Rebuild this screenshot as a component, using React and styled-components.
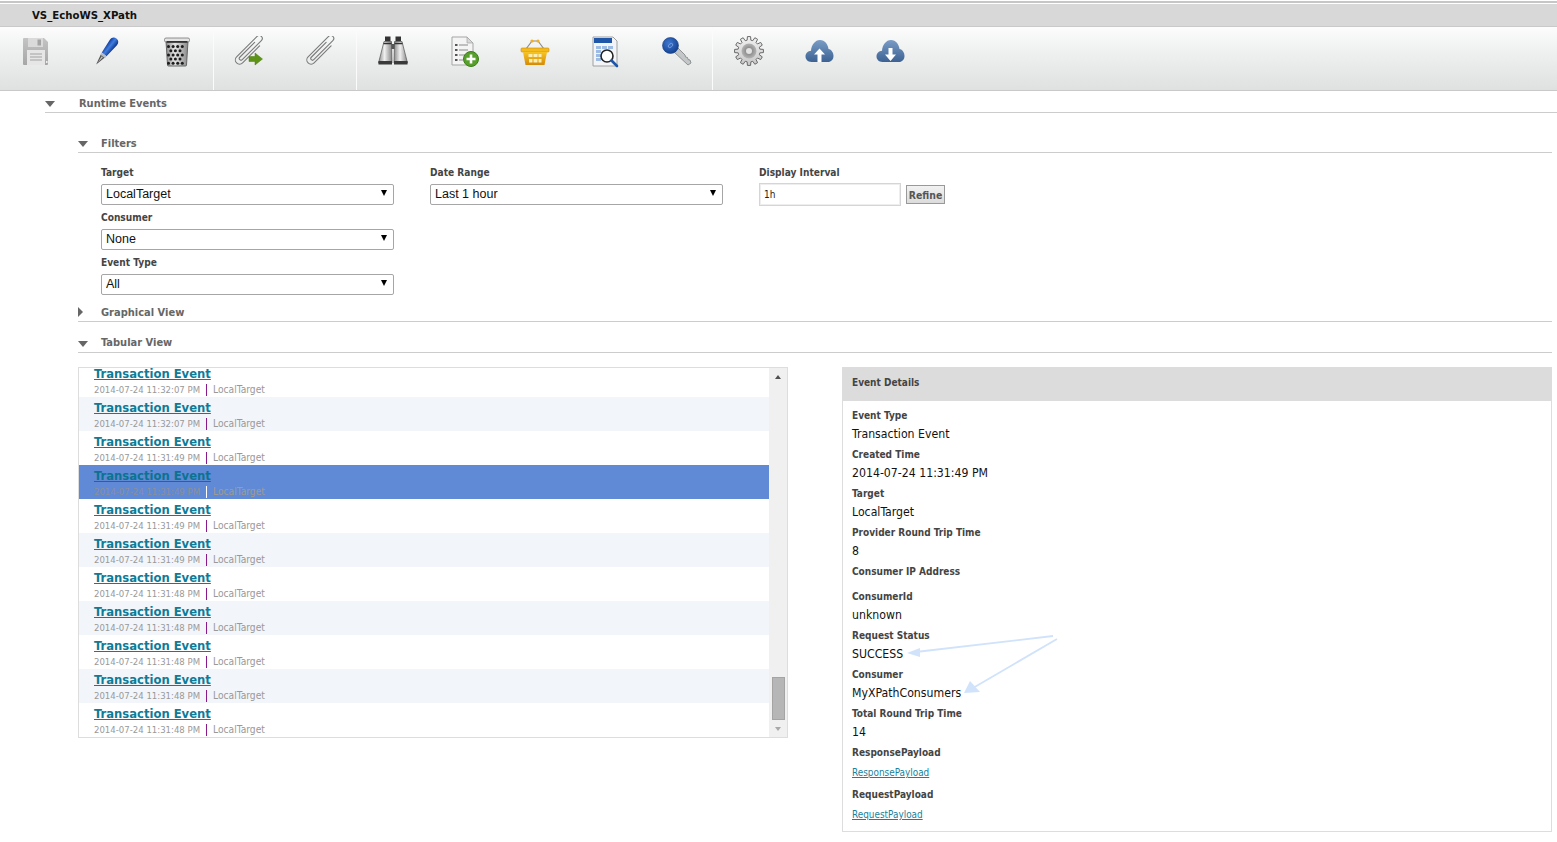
import React from 'react';
import styled, { createGlobalStyle } from 'styled-components';

const GlobalStyle = createGlobalStyle`
  html, body {
    margin: 0;
    padding: 0;
    background: #fff;
    overflow: hidden;
  }
  body {
    font-family: "DejaVu Sans Condensed", "DejaVu Sans", Verdana, sans-serif;
  }
`;

const Page = styled.div`
  width: 1557px;
  height: 842px;
  overflow: hidden;
  background: #fff;
`;

const TitleBar = styled.div`
  margin-top: 1px;
  border-top: 2px solid #c6c6c6;
  padding-top: 1px;
`;

const TitleText = styled.div`
  height: 22px;
  line-height: 24px;
  padding-left: 32px;
  background: #d8d8d8;
  border-bottom: 1px solid #c9c9c9;
  font-size: 11.3px;
  font-weight: bold;
  color: #111;
`;

const Toolbar = styled.div`
  display: flex;
  height: 63px;
  background: linear-gradient(#fcfcfc, #f0f1f1 35%, #dfe1e1);
  border-bottom: 1px solid #c9c9c9;
`;

const ToolGroup = styled.div`
  display: flex;
  height: 100%;
  border-right: ${(p) => (p.$last ? 'none' : '1px solid #fbfbfb')};
`;

const ToolButton = styled.div`
  width: 71px;
  display: flex;
  justify-content: center;
  padding-top: 9px;
  box-sizing: border-box;
`;

const SectionHead = styled.div`
  display: flex;
  align-items: center;
  height: ${(p) => (p.$height || 20) - 2}px;
  padding-top: 2px;
  margin-top: ${(p) => p.$top || 0}px;
  margin-left: ${(p) => p.$left}px;
  margin-right: ${(p) => p.$right || 0}px;
  border-bottom: 1px solid #ccc;
`;

const Caret = styled.span`
  width: ${(p) => p.$gap}px;
  flex: none;
  height: 10px;
  &::before {
    content: '';
    display: block;
    width: 0;
    height: 0;
    margin-top: ${(p) => (p.$open ? 3 : 0)}px;
    ${(p) =>
      p.$open
        ? `border-left: 5.5px solid transparent;
           border-right: 5.5px solid transparent;
           border-top: 6px solid #666;`
        : `border-top: 5.5px solid transparent;
           border-bottom: 5.5px solid transparent;
           border-left: 5px solid #666;`}
  }
`;

const SectionTitle = styled.div`
  font-size: 11px;
  padding-top: ${(p) => (p.$low ? 2 : 0)}px;
  font-weight: bold;
  color: #666;
`;

const FilterGrid = styled.div`
  display: grid;
  grid-template-columns: repeat(3, 329px);
  margin-left: 101px;
  padding-top: 11px;
  height: 137px;
`;

const FilterColumn = styled.div`
  display: flex;
  flex-direction: column;
`;

const FieldLabel = styled.label`
  display: block;
  height: 19px;
  line-height: 17px;
  font-size: 10.1px;
  font-weight: bold;
  color: #444;
`;

const SelectWrap = styled.div`
  position: relative;
  width: 293px;
  height: 21px;
  margin-bottom: 5px;
  &::after {
    content: '';
    position: absolute;
    right: 7px;
    top: 7px;
    width: 0;
    height: 0;
    border-left: 3px solid transparent;
    border-right: 3px solid transparent;
    border-top: 6px solid #000;
    pointer-events: none;
  }
`;

const Select = styled.select`
  appearance: none;
  width: 100%;
  height: 100%;
  box-sizing: border-box;
  border: 1px solid #a6a6a6;
  border-radius: 2px;
  background: #fff;
  padding: 0 4px;
  font-family: "Liberation Sans", Arial, sans-serif;
  font-size: 12.5px;
  color: #111;
`;

const IntervalRow = styled.div`
  display: flex;
  align-items: center;
  gap: 5px;
`;

const IntervalInput = styled.input`
  width: 142px;
  height: 23px;
  box-sizing: border-box;
  border: 1px solid #d5d5d5;
  box-shadow: inset 0 0 0 1px #eee;
  padding: 0 4px;
  font-family: "DejaVu Sans Condensed", "DejaVu Sans", sans-serif;
  font-size: 10px;
  color: #222;
`;

const RefineButton = styled.button`
  width: 39px;
  height: 19px;
  padding: 0;
  box-sizing: border-box;
  border: 1px solid #999;
  background: linear-gradient(#f2f2f2, #dcdcdc);
  font-family: "DejaVu Sans Condensed", "DejaVu Sans", sans-serif;
  font-size: 10.4px;
  font-weight: bold;
  color: #555;
`;

const TabularBody = styled.div`
  display: flex;
  align-items: flex-start;
  gap: 54px;
  margin: 14px 5px 0 78px;
`;

const ListBox = styled.div`
  width: 710px;
  height: 371px;
  box-sizing: border-box;
  border: 1px solid #ddd;
  display: flex;
  overflow: hidden;
`;

const Rows = styled.div`
  width: 690px;
  flex: none;
  overflow: hidden;
`;

const Row = styled.div`
  height: 34px;
  box-sizing: border-box;
  padding: 2px 0 0 15px;
  background: ${(p) => (p.$selected ? '#608ad5' : p.$alt ? '#f2f5fa' : '#fff')};
  &:first-child {
    margin-top: -5px;
  }
`;

const RowTitle = styled.a`
  display: block;
  width: max-content;
  height: 18px;
  line-height: 17px;
  font-size: 12.9px;
  font-weight: bold;
  text-decoration: underline;
  color: ${(p) => (p.$selected ? '#0b7391' : '#0f7b97')};
`;

const RowMeta = styled.div`
  display: flex;
  align-items: center;
  height: 13px;
  font-size: 9.5px;
  color: ${(p) => (p.$selected ? '#8a8f98' : '#999')};
`;

const RowTarget = styled.span`
  font-size: 10.2px;
  color: ${(p) => (p.$selected ? '#a09a90' : '#999')};
`;

const RowSeparator = styled.span`
  width: 1px;
  height: 12px;
  margin: 0 6px 0 6px;
  background: ${(p) => (p.$selected ? '#fff' : '#8a1a8a')};
`;

const ScrollTrack = styled.div`
  width: 18px;
  height: 100%;
  background: #f0f0f0;
  display: flex;
  flex-direction: column;
  align-items: center;
`;

const ScrollArrow = styled.div`
  height: 17px;
  flex: none;
  display: flex;
  align-items: center;
  justify-content: center;
  &::before {
    content: '';
    width: 0;
    height: 0;
    border-left: 3.5px solid transparent;
    border-right: 3.5px solid transparent;
    ${(p) =>
      p.$down ? 'border-top: 4px solid #a8a8a8;' : 'border-bottom: 4px solid #505050;'}
  }
`;

const ScrollThumb = styled.div`
  width: 13px;
  height: 43px;
  margin-top: auto;
  box-sizing: border-box;
  border: 1px solid #a4a4a4;
  background: #b6b6b6;
`;

const DetailsPanel = styled.div`
  position: relative;
  width: 710px;
  height: 465px;
  box-sizing: border-box;
  border: 1px solid #ddd;
`;

const DetailsHeader = styled.div`
  height: 34px;
  margin: -1px -1px 0;
  padding-left: 10px;
  line-height: 31px;
  background: #dcdcdc;
  font-size: 10px;
  font-weight: bold;
  color: #444;
`;

const DetailsBody = styled.div`
  padding: 6px 0 0 9px;
`;

const Field = styled.div`
  height: ${(p) => p.$height || 39}px;
`;

const DetailLabel = styled.div`
  height: 17px;
  line-height: 17px;
  font-size: 10px;
  font-weight: bold;
  color: #444;
`;

const DetailValue = styled.div`
  height: 20px;
  line-height: 20px;
  font-size: 12.2px;
  color: #111;
`;

const PayloadLink = styled.a`
  display: block;
  width: max-content;
  height: 23px;
  line-height: 24px;
  font-size: 9.9px;
  text-decoration: underline;
  color: #1a7f9c;
`;

const Annotation = styled.svg`
  position: absolute;
  left: 60px;
  top: 265px;
  pointer-events: none;
`;

const Icon = ({ children }) => (
  <svg width="32" height="32" viewBox="0 0 32 32">
    {children}
  </svg>
);

const SaveIcon = () => (
  <Icon>
    <defs>
      <linearGradient id="saveBody" x1="0" y1="0" x2="0" y2="1">
        <stop offset="0" stopColor="#c4c4c4" />
        <stop offset="1" stopColor="#a6a6a6" />
      </linearGradient>
    </defs>
    <path d="M4 2h20l4 4v22a1 1 0 0 1-1 1H4a1 1 0 0 1-1-1V3a1 1 0 0 1 1-1z" fill="url(#saveBody)" />
    <rect x="8" y="2" width="15" height="9" fill="#dadada" />
    <rect x="17.5" y="3.5" width="3.5" height="6" fill="#a4a4a4" />
    <rect x="7" y="14" width="18" height="15" fill="#e6e6e6" />
    <path d="M10 18h12M10 21h12M10 24h12" stroke="#a2a2a2" strokeWidth="1" />
    <rect x="26" y="25" width="1.5" height="2" fill="#eee" />
  </Icon>
);

const PenIcon = () => (
  <Icon>
    <defs>
      <linearGradient id="penBody" x1="0" y1="0" x2="1" y2="0">
        <stop offset="0" stopColor="#123a9c" />
        <stop offset="0.45" stopColor="#3f7fe0" />
        <stop offset="1" stopColor="#0f2f86" />
      </linearGradient>
    </defs>
    <g transform="translate(-1 0) rotate(38 16 16)">
      <path d="M16 -1c3 0 4.5 2 4.5 5L19 19h-6L11.5 4c0-3 1.5-5 4.5-5z" fill="url(#penBody)" />
      <rect x="13" y="19" width="6" height="2.5" fill="#b4bcc6" />
      <path d="M13.5 21.5h5L16 32z" fill="#555" />
      <path d="M15.3 22h1.4L16 29z" fill="#ccc" />
    </g>
  </Icon>
);

const TrashIcon = () => {
  const dots = [];
  for (let r = 0; r < 5; r++) {
    for (let c = 0; c < 4 - (r % 2); c++) {
      dots.push(<circle key={`${r}-${c}`} cx={7.5 + c * 4.6 + (r % 2) * 2.3} cy={10.5 + r * 4.2} r="1.5" fill="#1c1c1c" />);
    }
  }
  return (
    <Icon>
      <defs>
        <linearGradient id="binBody" x1="0" y1="0" x2="1" y2="0">
          <stop offset="0" stopColor="#8a8a8a" />
          <stop offset="0.4" stopColor="#e4e4e4" />
          <stop offset="1" stopColor="#8a8a8a" />
        </linearGradient>
      </defs>
      <g transform="translate(-1 0)">
        <path d="M5 5h22l-1.5 24a1 1 0 0 1-1 1H7.5a1 1 0 0 1-1-1z" fill="url(#binBody)" stroke="#666" />
        <rect x="3.5" y="2" width="25" height="4" rx="1.5" fill="#e4e4e4" stroke="#777" strokeWidth="0.8" />
        <rect x="5.5" y="5" width="21" height="1.8" fill="#333" />
        {dots}
      </g>
    </Icon>
  );
};

const clipPath = 'M3.5 10V31a1.75 1.75 0 0 0 3.5 0V4a3 3 0 0 0-6 0V33a4.25 4.25 0 0 0 8.5 0V9';

const Clip = ({ x, y }) => (
  <g transform={`translate(${x} ${y}) rotate(45) translate(-5.25 -19)`} fill="none" strokeLinecap="round">
    <path d={clipPath} stroke="#7a7a7a" strokeWidth="1.1" />
  </g>
);

const ClipIcon = () => (
  <Icon>
    <Clip x={16} y={14} />
  </Icon>
);

const ClipArrowIcon = () => (
  <Icon>
    <Clip x={15.5} y={14} />
    <path d="M15 20.5h6V17l7.5 6-7.5 6v-3.5h-6z" fill="#5d9418" stroke="#4a7d10" strokeWidth="0.5" />
  </Icon>
);

const BinocularsIcon = () => (
  <Icon>
    <defs>
      <linearGradient id="binoc" x1="0" y1="0" x2="1" y2="0">
        <stop offset="0" stopColor="#8b8b8b" />
        <stop offset="0.45" stopColor="#f0f0f0" />
        <stop offset="1" stopColor="#858585" />
      </linearGradient>
    </defs>
    <rect x="8" y="0.5" width="5.5" height="5" fill="#333" />
    <rect x="18.5" y="0.5" width="5.5" height="5" fill="#333" />
    <rect x="13" y="8" width="6" height="5" fill="#555" />
    <path d="M7 5.5h7.5L15 27H1.5z" fill="url(#binoc)" stroke="#555" strokeWidth="0.7" />
    <path d="M17.5 5.5H25L30.5 27H17z" fill="url(#binoc)" stroke="#555" strokeWidth="0.7" />
    <path d="M6.5 7.5h8M17.5 7.5h8" stroke="#333" strokeWidth="1.4" />
    <rect x="1.5" y="25" width="13.5" height="3.5" fill="#3a3a3a" />
    <rect x="17" y="25" width="13.5" height="3.5" fill="#3a3a3a" />
  </Icon>
);

const DocAddIcon = () => (
  <Icon>
    <path d="M4 1h15l6 6v22H4z" fill="#f4f4f4" stroke="#a5a5a5" />
    <path d="M19 1v6h6z" fill="#d8d8d8" stroke="#a5a5a5" strokeWidth="0.7" />
    <g fill="#555">
      <rect x="7" y="8" width="2.5" height="2" />
      <rect x="7" y="13" width="2.5" height="2" />
      <rect x="7" y="18" width="2.5" height="2" />
      <rect x="7" y="23" width="2.5" height="2" />
    </g>
    <path d="M11 9h9M11 14h9M11 19h6M11 24h4" stroke="#8a8a8a" strokeWidth="1.2" />
    <circle cx="23" cy="23" r="7.5" fill="#56a02a" stroke="#3d7d1a" />
    <path d="M23 18.5v9M18.5 23h9" stroke="#fff" strokeWidth="2.6" />
  </Icon>
);

const BasketIcon = () => (
  <Icon>
    <defs>
      <linearGradient id="basket" x1="0" y1="0" x2="0" y2="1">
        <stop offset="0" stopColor="#f7c524" />
        <stop offset="1" stopColor="#d68a06" />
      </linearGradient>
    </defs>
    <path d="M7 13L13 5M25 13L19 5M13 5h6" stroke="#8c8c8c" strokeWidth="1.2" fill="none" />
    <circle cx="13" cy="5" r="1.6" fill="#f2b01c" />
    <circle cx="19" cy="5" r="1.6" fill="#f2b01c" />
    <rect x="2" y="12" width="28" height="4" rx="1" fill="#f4bb1c" stroke="#c98a0a" strokeWidth="0.6" />
    <path d="M4 16h24l-2.5 13h-19z" fill="url(#basket)" />
    <g fill="#fbeeb4">
      <rect x="9.5" y="18" width="4" height="3" />
      <rect x="14.5" y="18" width="4" height="3" />
      <rect x="19.5" y="18" width="3" height="3" />
      <rect x="10" y="23" width="3.5" height="3.5" />
      <rect x="14.5" y="23" width="4" height="3.5" />
      <rect x="19.5" y="23" width="3" height="3.5" />
    </g>
  </Icon>
);

const DocSearchIcon = () => (
  <Icon>
    <path d="M3 1h20l4 4v25H3z" fill="#f2f4f7" stroke="#a0a0a0" />
    <rect x="4" y="2" width="18" height="5" fill="#1f56a8" />
    <g fill="#9cbce6">
      <rect x="6" y="10" width="5" height="3" />
      <rect x="12" y="10" width="5" height="3" />
      <rect x="18" y="10" width="5" height="3" />
      <rect x="6" y="14" width="5" height="3" />
      <rect x="6" y="18" width="5" height="3" />
      <rect x="6" y="22" width="5" height="3" />
    </g>
    <circle cx="17" cy="20" r="6" fill="#fff" fillOpacity="0.85" stroke="#222" strokeWidth="1.6" />
    <path d="M21.5 24.5L27 30" stroke="#1f56a8" strokeWidth="2.6" strokeLinecap="round" />
  </Icon>
);

const KeyIcon = () => (
  <Icon>
    <defs>
      <radialGradient id="keyHead" cx="0.4" cy="0.35" r="0.7">
        <stop offset="0" stopColor="#3f78d0" />
        <stop offset="1" stopColor="#123f8e" />
      </radialGradient>
    </defs>
    <path d="M12 15L27 29l3-2-1-3-2-.5-.5-2-2-.5-.5-2L15 10z" fill="#c4c7c7" stroke="#8f9393" />
    <circle cx="9.5" cy="9.5" r="8" fill="url(#keyHead)" stroke="#123a80" strokeWidth="0.6" />
    <ellipse cx="9.5" cy="9.5" rx="2.6" ry="1.6" transform="rotate(-40 9.5 9.5)" fill="none" stroke="#7fa6e0" strokeWidth="0.8" />
  </Icon>
);

// gear outline: 12 teeth around the hub
const gearPath = () => {
  const pts = [];
  for (let i = 0; i < 12; i++) {
    const a = (i * Math.PI) / 6;
    [[-0.17, 11], [-0.11, 14.5], [0.11, 14.5], [0.17, 11]].forEach(([off, r]) => {
      pts.push(`${(16 + r * Math.sin(a + off)).toFixed(2)} ${(15 - r * Math.cos(a + off)).toFixed(2)}`);
    });
  }
  return `M${pts.join('L')}Z`;
};

const GearIcon = () => (
  <Icon>
    <defs>
      <linearGradient id="gearBody" x1="0" y1="0" x2="0" y2="1">
        <stop offset="0" stopColor="#f2f2f2" />
        <stop offset="1" stopColor="#c6c6c6" />
      </linearGradient>
      <radialGradient id="gearCore" cx="0.5" cy="0.5" r="0.5">
        <stop offset="0.35" stopColor="#8a8a8a" />
        <stop offset="1" stopColor="#b4b4b4" />
      </radialGradient>
    </defs>
    <path d={gearPath()} fill="url(#gearBody)" stroke="#6a6a6a" strokeWidth="1" />
    <circle cx="16" cy="15" r="7.5" fill="url(#gearCore)" />
    <circle cx="16" cy="15" r="3" fill="#e2e2e2" />
  </Icon>
);

const CloudShape = ({ id }) => (
  <>
    <defs>
      <linearGradient id={id} x1="0" y1="0" x2="0" y2="1">
        <stop offset="0" stopColor="#7a9cc6" />
        <stop offset="1" stopColor="#3c6293" />
      </linearGradient>
    </defs>
    <path
      d="M7.5 26C3.5 26 1.5 23 1.5 20.5 1.5 17 4 15 7 14.7 7.5 9 11 4 16 4 21 4 24 8.5 24.5 13 27.5 13.5 29.5 16.5 29.5 20 29.5 23.5 27 26 24 26z"
      fill={`url(#${id})`}
    />
  </>
);

const CloudUpIcon = () => (
  <Icon>
    <CloudShape id="cloudUp" />
    <path d="M15.5 12.5l5.5 6h-3.5V26h-4v-7.5H10z" fill="#fff" />
  </Icon>
);

const CloudDownIcon = () => (
  <Icon>
    <CloudShape id="cloudDown" />
    <path d="M13.5 12h4v6.5H21L15.5 25 10 18.5h3.5z" fill="#fff" />
  </Icon>
);

const toolGroups = [
  [SaveIcon, PenIcon, TrashIcon],
  [ClipArrowIcon, ClipIcon],
  [BinocularsIcon, DocAddIcon, BasketIcon, DocSearchIcon, KeyIcon],
  [GearIcon, CloudUpIcon, CloudDownIcon],
];

const rowTimes = [
  '11:32:07', '11:32:07', '11:31:49', '11:31:49', '11:31:49', '11:31:49',
  '11:31:48', '11:31:48', '11:31:48', '11:31:48', '11:31:48',
];

const details = [
  { label: 'Event Type', value: 'Transaction Event' },
  { label: 'Created Time', value: '2014-07-24 11:31:49 PM' },
  { label: 'Target', value: 'LocalTarget' },
  { label: 'Provider Round Trip Time', value: '8' },
  { label: 'Consumer IP Address', value: '', height: 25 },
  { label: 'ConsumerId', value: 'unknown' },
  { label: 'Request Status', value: 'SUCCESS' },
  { label: 'Consumer', value: 'MyXPathConsumers' },
  { label: 'Total Round Trip Time', value: '14' },
];

const App = () => (
  <Page>
    <GlobalStyle />
    <TitleBar>
      <TitleText>VS_EchoWS_XPath</TitleText>
    </TitleBar>
    <Toolbar>
      {toolGroups.map((group, g) => (
        <ToolGroup key={g} $last={g === toolGroups.length - 1}>
          {group.map((ToolIcon, i) => (
            <ToolButton key={i}>
              <ToolIcon />
            </ToolButton>
          ))}
        </ToolGroup>
      ))}
    </Toolbar>

    <SectionHead $left={45} $height={21}>
      <Caret $open $gap={34} />
      <SectionTitle $low>Runtime Events</SectionTitle>
    </SectionHead>

    <SectionHead $left={78} $right={5} $top={19} $height={20}>
      <Caret $open $gap={23} />
      <SectionTitle>Filters</SectionTitle>
    </SectionHead>
    <FilterGrid>
      <FilterColumn>
        <FieldLabel>Target</FieldLabel>
        <SelectWrap>
          <Select defaultValue="LocalTarget">
            <option>LocalTarget</option>
          </Select>
        </SelectWrap>
        <FieldLabel>Consumer</FieldLabel>
        <SelectWrap>
          <Select defaultValue="None">
            <option>None</option>
          </Select>
        </SelectWrap>
        <FieldLabel>Event Type</FieldLabel>
        <SelectWrap>
          <Select defaultValue="All">
            <option>All</option>
          </Select>
        </SelectWrap>
      </FilterColumn>
      <FilterColumn>
        <FieldLabel>Date Range</FieldLabel>
        <SelectWrap>
          <Select defaultValue="Last 1 hour">
            <option>Last 1 hour</option>
          </Select>
        </SelectWrap>
      </FilterColumn>
      <FilterColumn>
        <FieldLabel>Display Interval</FieldLabel>
        <IntervalRow>
          <IntervalInput defaultValue="1h" />
          <RefineButton>Refine</RefineButton>
        </IntervalRow>
      </FilterColumn>
    </FilterGrid>

    <SectionHead $left={78} $right={5} $height={20}>
      <Caret $gap={23} />
      <SectionTitle>Graphical View</SectionTitle>
    </SectionHead>

    <SectionHead $left={78} $right={5} $top={9} $height={21}>
      <Caret $open $gap={23} />
      <SectionTitle>Tabular View</SectionTitle>
    </SectionHead>

    <TabularBody>
      <ListBox>
        <Rows>
          {rowTimes.map((time, i) => (
            <Row key={i} $alt={i % 2 === 1} $selected={i === 3}>
              <RowTitle $selected={i === 3}>Transaction Event</RowTitle>
              <RowMeta $selected={i === 3}>
                2014-07-24 {time} PM
                <RowSeparator $selected={i === 3} />
                <RowTarget $selected={i === 3}>LocalTarget</RowTarget>
              </RowMeta>
            </Row>
          ))}
        </Rows>
        <ScrollTrack>
          <ScrollArrow />
          <ScrollThumb />
          <ScrollArrow $down />
        </ScrollTrack>
      </ListBox>

      <DetailsPanel>
        <DetailsHeader>Event Details</DetailsHeader>
        <DetailsBody>
          {details.map((d) => (
            <Field key={d.label} $height={d.height}>
              <DetailLabel>{d.label}</DetailLabel>
              {d.value && <DetailValue>{d.value}</DetailValue>}
            </Field>
          ))}
          <Field $height={42}>
            <DetailLabel>ResponsePayload</DetailLabel>
            <PayloadLink>ResponsePayload</PayloadLink>
          </Field>
          <Field>
            <DetailLabel>RequestPayload</DetailLabel>
            <PayloadLink>RequestPayload</PayloadLink>
          </Field>
        </DetailsBody>
        <Annotation width="160" height="70" viewBox="0 0 160 70">
          <g fill="#d0e3fb" stroke="none">
            <path d="M150 3L17 18.5" stroke="#d0e3fb" strokeWidth="1.8" fill="none" />
            <path d="M4 20L17 15L17 24z" />
            <path d="M154 6L70 55" stroke="#d0e3fb" strokeWidth="1.8" fill="none" />
            <path d="M61 60L67 48L77 59z" />
          </g>
        </Annotation>
      </DetailsPanel>
    </TabularBody>
  </Page>
);

export default App;
